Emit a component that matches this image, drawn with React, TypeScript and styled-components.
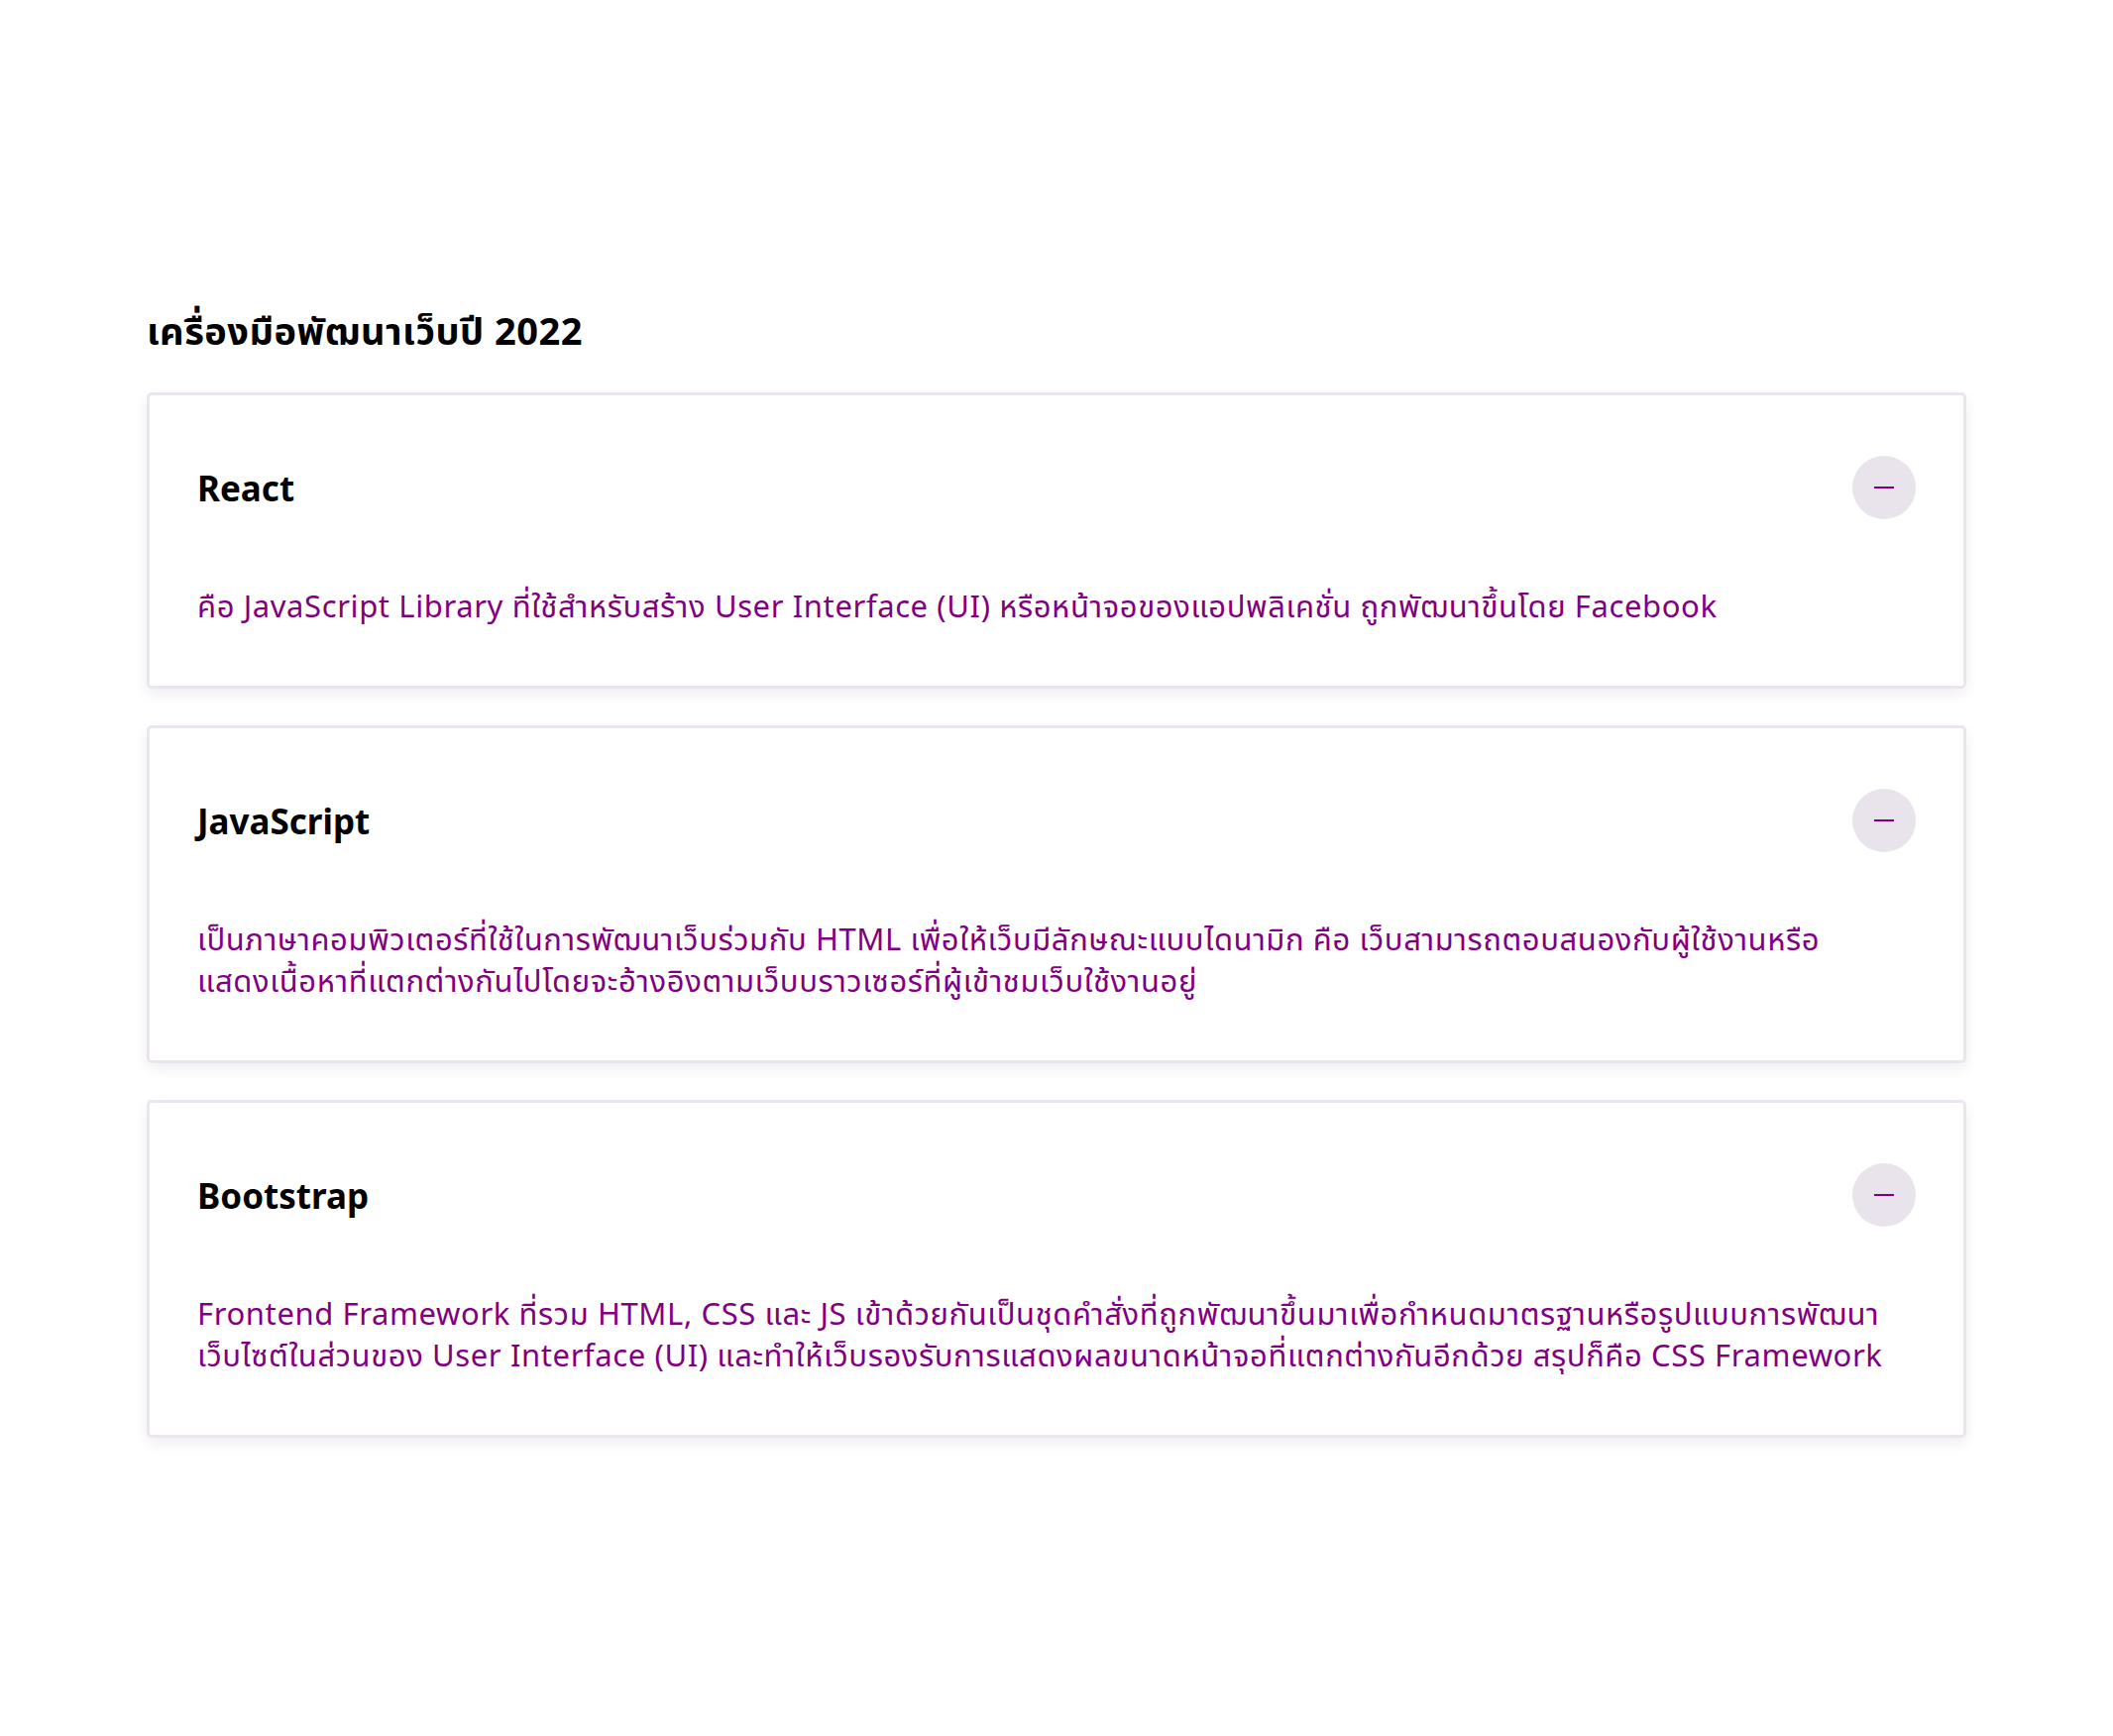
import React from "react";
import styled, { createGlobalStyle } from "styled-components";

const GlobalStyle = createGlobalStyle`
  body {
    margin: 0;
    background: #ffffff;
    font-family: "Noto Sans", "Noto Sans Thai", "Loma", "Open Sans", sans-serif;
  }
`;

type Tool = {
  name: string;
  detail: string;
};

const tools: Tool[] = [
  {
    name: "React",
    detail:
      "คือ JavaScript Library ที่ใช้สำหรับสร้าง User Interface (UI) หรือหน้าจอของแอปพลิเคชั่น ถูกพัฒนาขึ้นโดย Facebook",
  },
  {
    name: "JavaScript",
    detail:
      "เป็นภาษาคอมพิวเตอร์ที่ใช้ในการพัฒนาเว็บร่วมกับ HTML เพื่อให้เว็บมีลักษณะแบบไดนามิก คือ เว็บสามารถตอบสนองกับผู้ใช้งานหรือแสดงเนื้อหาที่แตกต่างกันไปโดยจะอ้างอิงตามเว็บบราวเซอร์ที่ผู้เข้าชมเว็บใช้งานอยู่",
  },
  {
    name: "Bootstrap",
    detail:
      "Frontend Framework ที่รวม HTML, CSS และ JS เข้าด้วยกันเป็นชุดคำสั่งที่ถูกพัฒนาขึ้นมาเพื่อกำหนดมาตรฐานหรือรูปแบบการพัฒนาเว็บไซต์ในส่วนของ User Interface (UI) และทำให้เว็บรองรับการแสดงผลขนาดหน้าจอที่แตกต่างกันอีกด้วย สรุปก็คือ CSS Framework",
  },
];

export default function App() {
  return (
    <>
      <GlobalStyle />
      <Page>
        <Heading>เครื่องมือพัฒนาเว็บปี 2022</Heading>
        <List>
          {tools.map((tool) => (
            <Card key={tool.name}>
              <CardHeader>
                <CardTitle>{tool.name}</CardTitle>
                <ToggleButton aria-label="collapse">
                  <svg width="20" height="20" viewBox="0 0 20 20">
                    <line
                      x1="0"
                      y1="10"
                      x2="20"
                      y2="10"
                      stroke="#800080"
                      strokeWidth="2"
                    />
                  </svg>
                </ToggleButton>
              </CardHeader>
              <CardBody>{tool.detail}</CardBody>
            </Card>
          ))}
        </List>
      </Page>
    </>
  );
}

const Page = styled.main`
  max-width: 1836px;
  margin: 0 auto;
  padding: 311px 0 120px;
`;

const Heading = styled.h1`
  margin: 0 0 41px;
  font-size: 38px;
  line-height: 44px;
  letter-spacing: 0.5px;
  font-weight: 700;
  color: #000;
`;

const List = styled.div`
  display: flex;
  flex-direction: column;
  gap: 37px;
`;

const Card = styled.section`
  border: 3px solid #ebe6ee;
  border-radius: 5px;
  background: #fff;
  box-shadow: 0 6px 14px rgba(40, 20, 50, 0.07);
  padding: 61px 48px 60px;
`;

const CardHeader = styled.div`
  display: flex;
  align-items: center;
  justify-content: space-between;
  height: 64px;
`;

const CardTitle = styled.h2`
  margin: 0;
  font-size: 35px;
  font-weight: 700;
  color: #000;
`;

const ToggleButton = styled.button`
  display: flex;
  align-items: center;
  justify-content: center;
  width: 64px;
  height: 64px;
  padding: 0;
  border: none;
  border-radius: 50%;
  background: #e9e4ec;
  cursor: pointer;
`;

const CardBody = styled.p`
  margin: 66px 0 0;
  padding-right: 28px;
  font-size: 31px;
  line-height: 42px;
  letter-spacing: 0.6px;
  font-weight: 400;
  color: #800080;
`;
